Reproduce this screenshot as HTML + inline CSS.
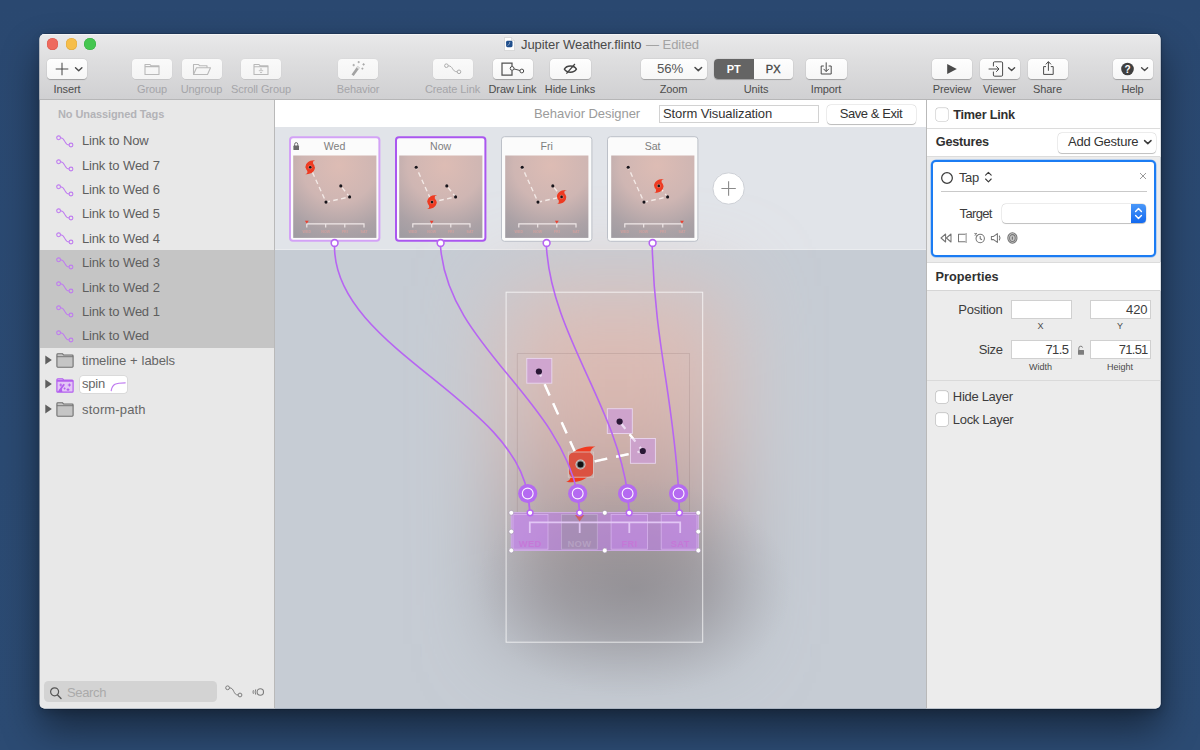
<!DOCTYPE html>
<html>
<head>
<meta charset="utf-8">
<title>Flinto</title>
<style>
*{box-sizing:border-box;margin:0;padding:0}
html,body{width:1200px;height:750px;overflow:hidden}
body{font-family:"Liberation Sans",sans-serif;background:#2b4970;position:relative;color:#3c3c3c}
.a{position:absolute}
#desk{position:absolute;left:0;top:0;width:1200px;height:750px;background:linear-gradient(180deg,#2a4870 0%,#2b4a72 60%,#2c4b73 100%)}
#shadow{position:absolute;left:39.5px;top:34px;width:1121px;height:674.5px;border-radius:5px;box-shadow:0 0 0 0.5px rgba(0,0,0,0.3),0 20px 38px rgba(0,0,0,0.46),0 3px 10px rgba(0,0,0,0.16)}
#win{position:absolute;left:0;top:0;width:1200px;height:750px;clip-path:inset(34px 39.5px 41.5px 39.5px round 5px);background:#ececec}
#tbar{position:absolute;left:0;top:34px;width:1200px;height:66px;background:linear-gradient(180deg,#e9e9ea 0%,#dededf 40%,#d0d0d2 100%);border-bottom:1px solid #b6b6b7;box-shadow:inset 0 1px 0 rgba(255,255,255,0.55)}
.tl{position:absolute;top:38.2px;width:11.6px;height:11.6px;border-radius:50%}
.btn{position:absolute;top:59px;height:20px;border-radius:4px;background:linear-gradient(180deg,#fefefe,#f6f6f6);box-shadow:0 0.5px 0.8px rgba(0,0,0,0.24),0 0 0 0.5px rgba(0,0,0,0.05)}
.btn.dis{background:linear-gradient(180deg,#fafafa,#f4f4f4);box-shadow:0 0.5px 0.5px rgba(0,0,0,0.13),0 0 0 0.5px rgba(0,0,0,0.03)}
.lbl{position:absolute;top:82px;width:90px;margin-left:-45px;text-align:center;font-size:11px;line-height:14px;color:#4d4d4d;white-space:nowrap;letter-spacing:-0.1px}
.lbl.dis{color:#a5a5a9}
.btn svg{position:absolute;left:0;top:0;overflow:visible}
/* sidebar */
#side{position:absolute;left:39.5px;top:100px;width:235px;height:609px;background:#e8e8e8;border-right:1px solid #b9b9b9}
.row{position:absolute;left:82.1px;font-size:13px;line-height:16px;color:#5e5e5e;white-space:nowrap;letter-spacing:-0.24px;word-spacing:0.5px;margin-top:0.6px}
.lk{position:absolute;left:56px;width:18px;height:13px;overflow:visible}
/* right panel */
#rp{position:absolute;left:925.5px;top:100px;width:235px;height:609px;background:#ececec;border-left:1px solid #b9b9b9}
.cb{position:absolute;width:12.6px;height:12.6px;border-radius:2.5px;background:#fff;box-shadow:0 0 0 0.5px rgba(0,0,0,0.25),inset 0 0.5px 1px rgba(0,0,0,0.06)}
.fld{position:absolute;height:19px;width:60.5px;background:#fff;border:1px solid #d0d0d0;font-size:13px;line-height:17px;text-align:right;padding-right:2.2px;color:#3c3c3c}
.sm{position:absolute;font-size:9px;line-height:10px;width:40px;margin-left:-20px;text-align:center;color:#4a4a4a}
.t13{position:absolute;font-size:13px;line-height:16px;white-space:nowrap;color:#3c3c3c}
.b13{position:absolute;font-size:12.7px;line-height:16px;font-weight:bold;white-space:nowrap;color:#303030;letter-spacing:-0.25px}
/* canvas */
#strip{position:absolute;left:275px;top:127.5px;width:651px;height:122.5px;background:#e1e4e9}
#canvas{position:absolute;left:275px;top:250px;width:651px;height:460px;background:#c6ccd4;overflow:hidden}
.card{position:absolute;top:136px;width:92px;height:106.5px;background:#fbfbfb;border-radius:3px}
.card .ttl{position:absolute;left:0;top:4px;width:100%;text-align:center;font-size:11px;line-height:13px;color:#777}
.card svg{position:absolute;left:4.5px;top:19.5px}
</style>
</head>
<body>
<div id="desk"></div>
<div id="shadow"></div>
<div id="win">
  <div id="tbar"></div>
  <div class="tl" style="left:46.8px;background:#ee6a5e;box-shadow:inset 0 0 0 0.5px #dc5a4e"></div>
  <div class="tl" style="left:65.6px;background:#f6be4a;box-shadow:inset 0 0 0 0.5px #dfa83c"></div>
  <div class="tl" style="left:84.4px;background:#45c650;box-shadow:inset 0 0 0 0.5px #38ae42"></div>
  <!--TITLE-->
  <!-- title -->
  <svg class="a" style="left:503.5px;top:37px" width="11" height="14" viewBox="0 0 11 14"><path d="M0.5 0.5H7.5L10.5 3.5V13.5H0.5Z" fill="#fdfdfd" stroke="#c9c9c9" stroke-width="0.6"/><path d="M7.5 0.5V3.5H10.5" fill="#e8e8e8" stroke="#c9c9c9" stroke-width="0.5"/><rect x="2.1" y="3.8" width="6.4" height="6.4" rx="1.4" fill="#1f4e8c"/><path d="M3.6 8.4C5 7.8 5.6 6.8 5.8 5" stroke="#9fb1c9" stroke-width="0.9" fill="none"/></svg>
  <div class="a" style="left:521px;top:36.5px;font-size:13px;line-height:16px;white-space:nowrap;color:#4a4a4a;letter-spacing:-0.07px">Jupiter Weather.flinto <span style="color:#a3a3a3;margin-left:1.2px">— Edited</span></div>

  <!-- toolbar buttons -->
  <div class="btn" style="left:47px;width:40px">
    <svg width="40" height="20"><path d="M8.7 10H21.3M15 3.7V16.3" stroke="#4a4a4a" stroke-width="1.05" fill="none"/><path d="M28.5 8.7L31.7 11.7L34.9 8.7" stroke="#4a4a4a" stroke-width="1.4" fill="none" stroke-linecap="round" stroke-linejoin="round"/></svg>
  </div>
  <div class="lbl" style="left:67px">Insert</div>

  <div class="btn dis" style="left:132px;width:40px">
    <svg width="40" height="20"><path d="M13 5.5H18L19 6.7H27V15.5H13Z M13 7.6H27" stroke="#b9b9b9" stroke-width="1.1" fill="none" stroke-linejoin="round"/></svg>
  </div>
  <div class="lbl dis" style="left:152px">Group</div>

  <div class="btn dis" style="left:181.5px;width:40px">
    <svg width="40" height="20"><path d="M11.5 15.5V5.5H16.5L17.5 6.7H25V8.7" stroke="#b9b9b9" stroke-width="1.1" fill="none" stroke-linejoin="round"/><path d="M11.5 15.5L14.5 8.7H28.5L25.5 15.5Z" stroke="#b9b9b9" stroke-width="1.1" fill="none" stroke-linejoin="round"/></svg>
  </div>
  <div class="lbl dis" style="left:201.5px">Ungroup</div>

  <div class="btn dis" style="left:241px;width:40px">
    <svg width="40" height="20"><path d="M13 5.5H18L19 6.7H27V15.5H13Z M13 7.8H27" stroke="#b9b9b9" stroke-width="1.1" fill="none" stroke-linejoin="round"/><path d="M18.7 10.5L20 9.1L21.3 10.5Z M18.7 12.9L20 14.3L21.3 12.9Z" fill="#b4b4b4"/><path d="M17.8 11.7H22.2" stroke="#b4b4b4" stroke-width="0.8"/></svg>
  </div>
  <div class="lbl dis" style="left:261px">Scroll Group</div>

  <div class="btn dis" style="left:338px;width:40px">
    <svg width="40" height="20"><path d="M14.6 16.2L20.6 7.9" stroke="#a3a3a3" stroke-width="2.7"/><path d="M19.5 9.4L20.8 7.6" stroke="#dcdcdc" stroke-width="2.7"/><path d="M15.7 4.9V7.3M14.5 6.1H16.9 M20.7 2V4.2M19.6 3.1H21.8 M25.6 4.2V6.6M24.4 5.4H26.8 M24.4 8.6V10.6M23.4 9.6H25.4" stroke="#a6a6a6" stroke-width="0.9"/></svg>
  </div>
  <div class="lbl dis" style="left:358px">Behavior</div>

  <div class="btn dis" style="left:433px;width:40px">
    <svg width="40" height="20"><circle cx="13.4" cy="6.7" r="1.8" fill="none" stroke="#acacac" stroke-width="1"/><circle cx="26" cy="12.8" r="1.8" fill="none" stroke="#acacac" stroke-width="1"/><path d="M15.2 6.8C20.2 6.8 19 12.8 24.2 12.8" fill="none" stroke="#acacac" stroke-width="1"/></svg>
  </div>
  <div class="lbl dis" style="left:452.5px">Create Link</div>

  <div class="btn" style="left:493px;width:40px">
    <svg width="40" height="20"><path d="M19 7.2V4H9V16H19V11.6" fill="none" stroke="#525252" stroke-width="1.25"/><circle cx="19.1" cy="9.4" r="1.9" fill="#fff" stroke="#4a4a4a" stroke-width="1"/><circle cx="28.8" cy="12" r="1.9" fill="#fff" stroke="#4a4a4a" stroke-width="1"/><path d="M20.9 9.9L27 11.5" stroke="#4a4a4a" stroke-width="1"/></svg>
  </div>
  <div class="lbl" style="left:512.5px">Draw Link</div>

  <div class="btn" style="left:550px;width:40.5px">
    <svg width="40" height="20"><path d="M14.4 10.1C16.8 6 24 6 26.4 10.1C24 14.2 16.8 14.2 14.4 10.1Z" fill="none" stroke="#444" stroke-width="1.5" stroke-linejoin="round"/><path d="M16.4 14.7L24.9 5" stroke="#444" stroke-width="1.25"/></svg>
  </div>
  <div class="lbl" style="left:570px">Hide Links</div>

  <div class="btn" style="left:641px;width:66px">
    <div class="a" style="left:16px;top:2px;font-size:13.2px;line-height:16px;color:#555;letter-spacing:-0.1px">56%</div>
    <svg width="66" height="20"><path d="M54 8.5L57.3 11.6L60.6 8.5" stroke="#4a4a4a" stroke-width="1.5" fill="none" stroke-linecap="round" stroke-linejoin="round"/></svg>
  </div>
  <div class="lbl" style="left:673.5px">Zoom</div>

  <div class="btn" style="left:713.5px;width:79px;overflow:hidden">
    <div class="a" style="left:0;top:0;width:40.5px;height:20px;background:#646464"></div>
    <div class="a" style="left:0;top:3.5px;width:40.5px;text-align:center;font-size:11px;line-height:13px;font-weight:bold;color:#fff">PT</div>
    <div class="a" style="left:40.5px;top:3.5px;width:38.5px;text-align:center;font-size:11px;line-height:13px;font-weight:normal;-webkit-text-stroke:0.35px #444;color:#444;letter-spacing:0.2px">PX</div>
  </div>
  <div class="lbl" style="left:756px">Units</div>

  <div class="btn" style="left:806px;width:41px">
    <svg width="41" height="20"><path d="M17.8 7H15.2V15H25.2V7H22.6" fill="none" stroke="#4a4a4a" stroke-width="1"/><path d="M20.2 3.4V12.4M17.6 9.9L20.2 12.6L22.8 9.9" fill="none" stroke="#4a4a4a" stroke-width="1"/></svg>
  </div>
  <div class="lbl" style="left:826px">Import</div>

  <div class="btn" style="left:932px;width:40px">
    <svg width="40" height="20"><path d="M15.2 5L24.8 10L15.2 15Z" fill="#4a4a4a"/></svg>
  </div>
  <div class="lbl" style="left:952px">Preview</div>

  <div class="btn" style="left:980px;width:40px">
    <svg width="40" height="20"><path d="M13.4 7.4V4Q13.4 2.8 14.6 2.8H21.4Q22.6 2.8 22.6 4V16Q22.6 17.2 21.4 17.2H14.6Q13.4 17.2 13.4 16V12.6" fill="none" stroke="#4a4a4a" stroke-width="1"/><path d="M8.6 10H18.8M16.2 7.2L19 10L16.2 12.8" fill="none" stroke="#4a4a4a" stroke-width="1"/><path d="M28.6 8.7L31.6 11.5L34.6 8.7" stroke="#4a4a4a" stroke-width="1.4" fill="none" stroke-linecap="round" stroke-linejoin="round"/></svg>
  </div>
  <div class="lbl" style="left:999.5px">Viewer</div>

  <div class="btn" style="left:1027.5px;width:40.5px">
    <svg width="40" height="20"><path d="M18 7.6H15.6V15.4H25.2V7.6H22.8" fill="none" stroke="#4a4a4a" stroke-width="1"/><path d="M20.4 11.8V2.8M17.8 5.4L20.4 2.6L23 5.4" fill="none" stroke="#4a4a4a" stroke-width="1"/></svg>
  </div>
  <div class="lbl" style="left:1047.5px">Share</div>

  <div class="btn" style="left:1113px;width:40px">
    <svg width="40" height="20"><circle cx="14.5" cy="10" r="6.3" fill="#3f3f3f"/><text x="14.5" y="13.6" font-family="Liberation Sans" font-weight="bold" font-size="10" text-anchor="middle" fill="#fff">?</text><path d="M28.6 8.7L31.6 11.5L34.6 8.7" stroke="#4a4a4a" stroke-width="1.4" fill="none" stroke-linecap="round" stroke-linejoin="round"/></svg>
  </div>
  <div class="lbl" style="left:1132.5px">Help</div>
  <!--/TOOLBAR-->
  <!--DESIGNERBAR-->
  <!-- designer bar -->
  <div class="a" style="left:275px;top:100px;width:651px;height:27.5px;background:#fff;border-bottom:1px solid #d4d6da"></div>
  <div class="a" style="left:534px;top:105.5px;font-size:13px;line-height:16px;color:#9b9b9b;white-space:nowrap;letter-spacing:-0.05px">Behavior Designer</div>
  <div class="a" style="left:658.5px;top:104.5px;width:160px;height:18.5px;background:#fff;border:1px solid #d2d2d2"></div>
  <div class="a" style="left:663px;top:105.5px;font-size:13px;line-height:16px;color:#333;white-space:nowrap;letter-spacing:-0.1px">Storm Visualization</div>
  <div class="a" style="left:826.5px;top:104.5px;width:89px;height:19px;border-radius:4px;background:#fff;box-shadow:0 0.5px 0.8px rgba(0,0,0,0.22),0 0 0 0.5px rgba(0,0,0,0.12)"></div>
  <div class="a" style="left:826.5px;top:105.5px;width:89px;text-align:center;font-size:13px;line-height:16px;color:#333;white-space:nowrap;letter-spacing:-0.42px">Save &amp; Exit</div>

  <!-- sidebar -->
  <div id="side"></div>
  <div class="a" style="left:39.5px;top:250px;width:234.5px;height:97.5px;background:#c5c5c5"></div>
  <div class="a" style="left:58px;top:107px;font-size:11px;line-height:14px;font-weight:bold;color:#b3b3b7;white-space:nowrap;letter-spacing:-0.1px">No Unassigned Tags</div>

  <svg class="lk" style="top:134.8px" viewBox="0 0 18 13"><circle cx="2.6" cy="2.8" r="1.9" fill="none" stroke="#bf7bf0" stroke-width="1.1"/><circle cx="15" cy="10" r="1.9" fill="none" stroke="#bf7bf0" stroke-width="1.1"/><path d="M4.5 2.8C9.5 2.8 8 10 13.1 10" fill="none" stroke="#bf7bf0" stroke-width="1.1"/></svg>
  <div class="row" style="top:132.8px">Link to Now</div>
  <svg class="lk" style="top:159.2px" viewBox="0 0 18 13"><circle cx="2.6" cy="2.8" r="1.9" fill="none" stroke="#bf7bf0" stroke-width="1.1"/><circle cx="15" cy="10" r="1.9" fill="none" stroke="#bf7bf0" stroke-width="1.1"/><path d="M4.5 2.8C9.5 2.8 8 10 13.1 10" fill="none" stroke="#bf7bf0" stroke-width="1.1"/></svg>
  <div class="row" style="top:157.2px">Link to Wed 7</div>
  <svg class="lk" style="top:183.5px" viewBox="0 0 18 13"><circle cx="2.6" cy="2.8" r="1.9" fill="none" stroke="#bf7bf0" stroke-width="1.1"/><circle cx="15" cy="10" r="1.9" fill="none" stroke="#bf7bf0" stroke-width="1.1"/><path d="M4.5 2.8C9.5 2.8 8 10 13.1 10" fill="none" stroke="#bf7bf0" stroke-width="1.1"/></svg>
  <div class="row" style="top:181.5px">Link to Wed 6</div>
  <svg class="lk" style="top:207.9px" viewBox="0 0 18 13"><circle cx="2.6" cy="2.8" r="1.9" fill="none" stroke="#bf7bf0" stroke-width="1.1"/><circle cx="15" cy="10" r="1.9" fill="none" stroke="#bf7bf0" stroke-width="1.1"/><path d="M4.5 2.8C9.5 2.8 8 10 13.1 10" fill="none" stroke="#bf7bf0" stroke-width="1.1"/></svg>
  <div class="row" style="top:205.9px">Link to Wed 5</div>
  <svg class="lk" style="top:232.2px" viewBox="0 0 18 13"><circle cx="2.6" cy="2.8" r="1.9" fill="none" stroke="#bf7bf0" stroke-width="1.1"/><circle cx="15" cy="10" r="1.9" fill="none" stroke="#bf7bf0" stroke-width="1.1"/><path d="M4.5 2.8C9.5 2.8 8 10 13.1 10" fill="none" stroke="#bf7bf0" stroke-width="1.1"/></svg>
  <div class="row" style="top:230.2px">Link to Wed 4</div>
  <svg class="lk" style="top:256.6px" viewBox="0 0 18 13"><circle cx="2.6" cy="2.8" r="1.9" fill="none" stroke="#bf7bf0" stroke-width="1.1"/><circle cx="15" cy="10" r="1.9" fill="none" stroke="#bf7bf0" stroke-width="1.1"/><path d="M4.5 2.8C9.5 2.8 8 10 13.1 10" fill="none" stroke="#bf7bf0" stroke-width="1.1"/></svg>
  <div class="row" style="top:254.6px">Link to Wed 3</div>
  <svg class="lk" style="top:281.0px" viewBox="0 0 18 13"><circle cx="2.6" cy="2.8" r="1.9" fill="none" stroke="#bf7bf0" stroke-width="1.1"/><circle cx="15" cy="10" r="1.9" fill="none" stroke="#bf7bf0" stroke-width="1.1"/><path d="M4.5 2.8C9.5 2.8 8 10 13.1 10" fill="none" stroke="#bf7bf0" stroke-width="1.1"/></svg>
  <div class="row" style="top:279.0px">Link to Wed 2</div>
  <svg class="lk" style="top:305.3px" viewBox="0 0 18 13"><circle cx="2.6" cy="2.8" r="1.9" fill="none" stroke="#bf7bf0" stroke-width="1.1"/><circle cx="15" cy="10" r="1.9" fill="none" stroke="#bf7bf0" stroke-width="1.1"/><path d="M4.5 2.8C9.5 2.8 8 10 13.1 10" fill="none" stroke="#bf7bf0" stroke-width="1.1"/></svg>
  <div class="row" style="top:303.3px">Link to Wed 1</div>
  <svg class="lk" style="top:329.7px" viewBox="0 0 18 13"><circle cx="2.6" cy="2.8" r="1.9" fill="none" stroke="#bf7bf0" stroke-width="1.1"/><circle cx="15" cy="10" r="1.9" fill="none" stroke="#bf7bf0" stroke-width="1.1"/><path d="M4.5 2.8C9.5 2.8 8 10 13.1 10" fill="none" stroke="#bf7bf0" stroke-width="1.1"/></svg>
  <div class="row" style="top:327.7px">Link to Wed</div>
  <svg class="a" style="left:45px;top:355px" width="8" height="10" viewBox="0 0 8 10"><path d="M0.3 0.6L6.8 5L0.3 9.4Z" fill="#5e5e5e"/></svg>
  <svg class="a" style="left:55.75px;top:353.0px" width="19" height="15" viewBox="0 0 19 15"><path d="M0.9 1.7Q0.9 0.8 1.8 0.8H6.6L7.6 2H16.2Q17.1 2 17.1 2.9V13.3Q17.1 14.2 16.2 14.2H1.8Q0.9 14.2 0.9 13.3Z" fill="#c5c5c5" stroke="#6f6f6f" stroke-width="1.1"/><path d="M0.9 3.7H17.1" stroke="#6f6f6f" stroke-width="0.9"/></svg>
  <div class="row" style="top:352.2px;color:#666;letter-spacing:-0.1px">timeline + labels</div>
  <svg class="a" style="left:45px;top:379.4px" width="8" height="10" viewBox="0 0 8 10"><path d="M0.3 0.6L6.8 5L0.3 9.4Z" fill="#5e5e5e"/></svg>
  <svg class="a" style="left:55.75px;top:377.6px" width="19" height="15" viewBox="0 0 19 15"><path d="M0.9 1.7Q0.9 0.8 1.8 0.8H6.6L7.6 2H16.2Q17.1 2 17.1 2.9V13.3Q17.1 14.2 16.2 14.2H1.8Q0.9 14.2 0.9 13.3Z" fill="#e3c6f6" stroke="#b35fee" stroke-width="1.2"/><path d="M0.9 2.9H17.1" stroke="#b35fee" stroke-width="1.8"/><path d="M3.2 13L8.2 6.2" stroke="#b35fee" stroke-width="1.8"/><path d="M4.8 5.6V8.4M3.4 7H6.2 M13.4 5.4V8.6M11.8 7H15 M12 10.2V13M10.6 11.6H13.4 M8.6 9.6V11.4M7.7 10.5H9.5" stroke="#b35fee" stroke-width="1.1"/><path d="M1.2 14L5.6 10.2L6.4 14Z" fill="#b35fee"/></svg>
  <div class="a" style="left:80px;top:376.3px;width:47px;height:17px;border-radius:3px;background:#fff;box-shadow:0 0 0 0.5px rgba(0,0,0,0.12)"></div>
  <div class="row" style="top:375.8px;color:#666">spin</div>
  <svg class="a" style="left:109.6px;top:379.6px" width="17" height="12" viewBox="0 0 17 12"><path d="M1.2 10.6C2.4 4.2 5.4 2.8 15.2 2.8" fill="none" stroke="#bf7bf0" stroke-width="1.2" stroke-linecap="round"/></svg>
  <svg class="a" style="left:45px;top:404px" width="8" height="10" viewBox="0 0 8 10"><path d="M0.3 0.6L6.8 5L0.3 9.4Z" fill="#5e5e5e"/></svg>
  <svg class="a" style="left:55.75px;top:402.0px" width="19" height="15" viewBox="0 0 19 15"><path d="M0.9 1.7Q0.9 0.8 1.8 0.8H6.6L7.6 2H16.2Q17.1 2 17.1 2.9V13.3Q17.1 14.2 16.2 14.2H1.8Q0.9 14.2 0.9 13.3Z" fill="#c5c5c5" stroke="#6f6f6f" stroke-width="1.1"/><path d="M0.9 3.7H17.1" stroke="#6f6f6f" stroke-width="0.9"/></svg>
  <div class="row" style="top:401.1px;color:#666;letter-spacing:0.15px">storm-path</div>
  <div class="a" style="left:44.2px;top:681.4px;width:173.2px;height:20.2px;border-radius:4.5px;background:#d3d3d3"></div>
  <svg class="a" style="left:49px;top:685.5px" width="14" height="14" viewBox="0 0 14 14"><circle cx="5.6" cy="5.8" r="4" fill="none" stroke="#555" stroke-width="1.2"/><path d="M8.6 8.9L12 12.4" stroke="#555" stroke-width="1.4" stroke-linecap="round"/></svg>
  <div class="a" style="left:67px;top:684.5px;font-size:13px;line-height:16px;color:#aaa;white-space:nowrap;letter-spacing:-0.35px">Search</div>
  <svg class="a" style="left:225px;top:685px" width="18" height="13" viewBox="0 0 18 13"><circle cx="2.6" cy="2.8" r="1.9" fill="none" stroke="#7d7d7d" stroke-width="1"/><circle cx="15" cy="10" r="1.9" fill="none" stroke="#7d7d7d" stroke-width="1"/><path d="M4.5 2.8C9.5 2.8 8 10 13.1 10" fill="none" stroke="#7d7d7d" stroke-width="1"/></svg>
  <svg class="a" style="left:250.5px;top:686px" width="14" height="12" viewBox="0 0 14 12"><circle cx="9.3" cy="6" r="3.2" fill="none" stroke="#7d7d7d" stroke-width="1.1"/><path d="M4.7 3.4Q3.5 6 4.7 8.6 M2.4 4.2Q1.6 6 2.4 7.8" fill="none" stroke="#7d7d7d" stroke-width="1"/></svg>

  <!--/SIDEBAR-->
  <!--CANVAS-->
  <!-- canvas -->
  <svg class="a" style="left:275px;top:127px" width="651" height="583" viewBox="275 127 651 583">
  <defs>
    <linearGradient id="abg" x1="0" y1="0" x2="0" y2="1">
      <stop offset="0" stop-color="#dcc0ba"/><stop offset="0.3" stop-color="#dbb9b1"/><stop offset="0.55" stop-color="#c4a9a6"/><stop offset="0.8" stop-color="#97949a"/><stop offset="1" stop-color="#a4a5ab"/>
    </linearGradient>
    <filter id="blur" x="-120%" y="-70%" width="340%" height="240%"><feGaussianBlur stdDeviation="42"/></filter>
    <radialGradient id="gry" cx="0.5" cy="0.5" r="0.5"><stop offset="0" stop-color="#8c8a8f" stop-opacity="0.62"/><stop offset="0.45" stop-color="#908e93" stop-opacity="0.36"/><stop offset="1" stop-color="#a0a0a6" stop-opacity="0"/></radialGradient>
    <radialGradient id="thg" cx="0.55" cy="0.12" r="1.0">
      <stop offset="0" stop-color="#ddbcb4"/><stop offset="0.45" stop-color="#cfb6b3"/><stop offset="0.8" stop-color="#aca2a6"/><stop offset="1" stop-color="#a09ca2"/>
    </radialGradient>
    <g id="hur">
      <path d="M-4.6,0.5 C-4.8,-4 -1.5,-7.3 5.2,-7.0 C3.0,-6.3 2.3,-5.4 3.0,-3.5 Z" fill="#ee3b22"/>
      <path d="M4.6,-0.5 C4.8,4 1.5,7.3 -4.9,6.9 C-3.0,6.3 -2.3,5.4 -3.0,3.5 Z" fill="#ee3b22"/>
      <circle r="4.5" fill="#ee3b22"/>
    </g>
    <g id="tails">
      <path d="M-4.6,0.5 C-4.8,-4 -1.5,-7.0 5.6,-6.7 C3.7,-5.9 3.2,-4.8 4.2,-2.2 Z" fill="#f03a20"/>
      <path d="M4.6,-0.5 C4.8,4 1.5,7.0 -5.4,6.6 C-3.6,5.9 -3.2,4.8 -4.2,2.2 Z" fill="#f03a20"/>
    </g>
    <g id="thumb">
      <rect x="0" y="0" width="83.2" height="82.4" fill="url(#thg)"/>
      <path d="M17,11.8L32.8,46.6L56.4,41.4L47.6,30.4" fill="none" stroke="#f3e9e6" stroke-width="1.35" stroke-dasharray="4.7 3.3" stroke-dashoffset="2.4"/>
      <path d="M13.6,72V68.4H70.8V72M32.5,68.4V72M51.6,68.4V72" fill="none" stroke="#f0e8e8" stroke-width="1.15"/>
      <g font-family="Liberation Sans" font-weight="bold" font-size="3.6" text-anchor="middle" fill="#e6a19b" opacity="0.62"><text x="13.6" y="77.8">WED</text><text x="32.5" y="77.6">NOW</text><text x="51.6" y="77.6">FRI</text><text x="70.8" y="77.6">SAT</text></g>
    </g>
  </defs>
  <rect x="275" y="127" width="651" height="123" fill="#e1e4e9"/>
  <rect x="275" y="250" width="651" height="460" fill="#c6ccd4"/>
  <rect x="275" y="249" width="651" height="1" fill="#fff" fill-opacity="0.3"/>
  <rect x="504" y="286" width="224" height="358" fill="url(#abg)" filter="url(#blur)"/>
  <ellipse cx="634" cy="588" rx="158" ry="110" fill="url(#gry)"/>
  <rect x="506.1" y="292.2" width="196.6" height="350" fill="none" stroke="#fff" stroke-opacity="0.72" stroke-width="1"/>
  <path d="M517.3,512V353.5H689.5V512" fill="none" stroke="#7a5a5a" stroke-opacity="0.22" stroke-width="0.8"/>
  <g fill="none" stroke="#fff" stroke-width="2.4"><path d="M538.9,371.5L580.6,464.4" stroke-dasharray="12.2 8.6" stroke-dashoffset="6.8"/><path d="M580.6,464.4L642.8,451" stroke-dasharray="12.8 9.1" stroke-dashoffset="7.5"/><path d="M642.8,451L619.6,421.6" stroke-dasharray="9.3 6.9" stroke-dashoffset="4.2"/></g>
  <rect x="526.8" y="358.4" width="25" height="24.8" fill="#cc9cd6" fill-opacity="0.74" stroke="#ecdaf4" stroke-opacity="0.9" stroke-width="0.9"/>
  <rect x="607.3" y="408.7" width="25" height="24.8" fill="#cc9cd6" fill-opacity="0.74" stroke="#ecdaf4" stroke-opacity="0.9" stroke-width="0.9"/>
  <rect x="630.4" y="438.5" width="25" height="24.8" fill="#cc9cd6" fill-opacity="0.74" stroke="#ecdaf4" stroke-opacity="0.9" stroke-width="0.9"/>
  <g fill="none" stroke="#fff" stroke-opacity="0.5" stroke-width="2.2"><path d="M538.9,371.5L580.6,464.4" stroke-dasharray="12.2 8.6" stroke-dashoffset="6.8"/><path d="M580.6,464.4L642.8,451" stroke-dasharray="12.8 9.1" stroke-dashoffset="7.5"/><path d="M642.8,451L619.6,421.6" stroke-dasharray="9.3 6.9" stroke-dashoffset="4.2"/></g>
  <circle cx="538.9" cy="371.5" r="3.1" fill="#2a1836"/>
  <circle cx="619.6" cy="421.6" r="3.1" fill="#2a1836"/>
  <circle cx="642.8" cy="451" r="3.1" fill="#2a1836"/>
  <g transform="translate(580.5,464.5) scale(2.67)"><use href="#tails"/></g>
  <rect x="568.6" y="452.3" width="24.6" height="24.6" rx="5.5" fill="#db5241"/>
  <rect x="568.3" y="452" width="25.2" height="25.2" fill="none" stroke="#d8c8c4" stroke-opacity="0.9" stroke-width="0.9"/>
  <circle cx="580.5" cy="464.5" r="5" fill="#d9d2d0"/><circle cx="580.5" cy="464.5" r="4.3" fill="#8e8e8e"/><circle cx="580.5" cy="464.5" r="3" fill="#121212"/>
  <path d="M334.5,246.5 C334.6,347.3 510.8,398.2 527.5,493.2" fill="none" stroke="#b765f2" stroke-width="1.6"/>
  <path d="M440.5,246.5 C448.1,344.7 556.2,395.3 577.6,493.2" fill="none" stroke="#b765f2" stroke-width="1.6"/>
  <path d="M546.4,246.5 C551.6,334.2 615.8,404.8 627.6,493.4" fill="none" stroke="#b765f2" stroke-width="1.6"/>
  <path d="M652.2,246.5 C655.1,346.4 673.0,394.2 678.8,493.4" fill="none" stroke="#b765f2" stroke-width="1.6"/>
  <rect x="511.2" y="512.6" width="187.2" height="38" fill="#bd7fe6" fill-opacity="0.6"/>
  <rect x="513" y="514.4" width="35" height="34.8" fill="#c98cee" fill-opacity="0.4" stroke="#dfbdf5" stroke-opacity="0.8" stroke-width="0.8"/>
  <rect x="561.5" y="514.4" width="35.8" height="34.8" fill="#9a90a2" fill-opacity="0.5" stroke="#cbb8da" stroke-opacity="0.7" stroke-width="0.8"/>
  <rect x="611.1" y="514.4" width="36.4" height="34.8" fill="#c98cee" fill-opacity="0.4" stroke="#dfbdf5" stroke-opacity="0.8" stroke-width="0.8"/>
  <rect x="661.2" y="514.4" width="35.8" height="34.8" fill="#c98cee" fill-opacity="0.4" stroke="#dfbdf5" stroke-opacity="0.8" stroke-width="0.8"/>
  <path d="M529.8,533V522.4H680.2V533M579.7,522.4V533M629.3,522.4V533" fill="none" stroke="#e6ccf7" stroke-opacity="0.9" stroke-width="1.8"/>
  <path d="M575,515H584.2L579.6,521.6Z" fill="#de5248" fill-opacity="0.75"/>
  <g font-family="Liberation Sans" font-weight="bold" font-size="9.4" letter-spacing="0.3" text-anchor="middle" fill="#c776d8" fill-opacity="0.92"><text x="530.2" y="546.6">WED</text><text x="579.4" y="546.6" fill="#b9a6c6" fill-opacity="0.8">NOW</text><text x="629.4" y="546.6">FRI</text><text x="680.2" y="546.6">SAT</text></g>
  <rect x="511.2" y="512.6" width="187.2" height="38" fill="none" stroke="#d9b4f3" stroke-opacity="0.9" stroke-width="0.8"/>
  <path d="M527.7,493.4L530.1,512.8" stroke="#b765f2" stroke-width="1.8"/>
  <circle cx="527.7" cy="493.5" r="9.6" fill="#b56af1"/><circle cx="527.7" cy="493.5" r="5.4" fill="none" stroke="#fff" stroke-opacity="0.92" stroke-width="1.15"/>
  <circle cx="530.1" cy="512.8" r="2.9" fill="#fff" stroke="#b765f2" stroke-width="1.5"/>
  <path d="M577.7,493.4L579.7,512.8" stroke="#b765f2" stroke-width="1.8"/>
  <circle cx="577.7" cy="493.5" r="9.6" fill="#b56af1"/><circle cx="577.7" cy="493.5" r="5.4" fill="none" stroke="#fff" stroke-opacity="0.92" stroke-width="1.15"/>
  <circle cx="579.7" cy="512.8" r="2.9" fill="#fff" stroke="#b765f2" stroke-width="1.5"/>
  <path d="M627.6,493.4L629.2,512.8" stroke="#b765f2" stroke-width="1.8"/>
  <circle cx="627.6" cy="493.5" r="9.6" fill="#b56af1"/><circle cx="627.6" cy="493.5" r="5.4" fill="none" stroke="#fff" stroke-opacity="0.92" stroke-width="1.15"/>
  <circle cx="629.2" cy="512.8" r="2.9" fill="#fff" stroke="#b765f2" stroke-width="1.5"/>
  <path d="M678.6,493.4L679.4,512.8" stroke="#b765f2" stroke-width="1.8"/>
  <circle cx="678.6" cy="493.5" r="9.6" fill="#b56af1"/><circle cx="678.6" cy="493.5" r="5.4" fill="none" stroke="#fff" stroke-opacity="0.92" stroke-width="1.15"/>
  <circle cx="679.4" cy="512.8" r="2.9" fill="#fff" stroke="#b765f2" stroke-width="1.5"/>
  <circle cx="511.3" cy="512.8" r="2.4" fill="#fff" stroke="#9a8aa8" stroke-width="0.5"/>
  <circle cx="511.3" cy="531.6" r="2.4" fill="#fff" stroke="#9a8aa8" stroke-width="0.5"/>
  <circle cx="511.3" cy="550.5" r="2.4" fill="#fff" stroke="#9a8aa8" stroke-width="0.5"/>
  <circle cx="604.8" cy="512.8" r="2.4" fill="#fff" stroke="#9a8aa8" stroke-width="0.5"/>
  <circle cx="604.8" cy="550.5" r="2.4" fill="#fff" stroke="#9a8aa8" stroke-width="0.5"/>
  <circle cx="698.3" cy="512.8" r="2.4" fill="#fff" stroke="#9a8aa8" stroke-width="0.5"/>
  <circle cx="698.3" cy="531.6" r="2.4" fill="#fff" stroke="#9a8aa8" stroke-width="0.5"/>
  <circle cx="698.3" cy="550.5" r="2.4" fill="#fff" stroke="#9a8aa8" stroke-width="0.5"/>
  <rect x="290.0" y="137.2" width="89.4" height="103.6" rx="3" fill="#fbfbfb" stroke="#d3a2f6" stroke-width="2"/>
  <g transform="translate(293.2,155.5)"><use href="#thumb"/>
    <circle cx="32.8" cy="46.6" r="1.55" fill="#17141a"/>
    <circle cx="56.4" cy="41.4" r="1.55" fill="#17141a"/>
    <circle cx="47.6" cy="30.4" r="1.55" fill="#17141a"/>
    <g transform="translate(17,11.8)"><use href="#hur"/><circle r="2.1" fill="#e8705e"/><circle r="1.3" fill="#12181a"/></g>
    <path d="M11.7,65.2H15.5L13.6,68.2Z" fill="#ea4030"/>
  </g>
  <circle cx="334.6" cy="243" r="3.4" fill="#fff" stroke="#b765f2" stroke-width="1.6"/>
  <rect x="396.0" y="137.2" width="89.4" height="103.6" rx="3" fill="#fbfbfb" stroke="#aa57ef" stroke-width="2"/>
  <g transform="translate(399.2,155.5)"><use href="#thumb"/>
    <circle cx="17" cy="11.8" r="1.55" fill="#17141a"/>
    <circle cx="56.4" cy="41.4" r="1.55" fill="#17141a"/>
    <circle cx="47.6" cy="30.4" r="1.55" fill="#17141a"/>
    <g transform="translate(32.8,46.6)"><use href="#hur"/><circle r="2.1" fill="#e8705e"/><circle r="1.3" fill="#12181a"/></g>
    <path d="M30.6,65.2H34.4L32.5,68.2Z" fill="#ea4030"/>
  </g>
  <circle cx="440.6" cy="243" r="3.4" fill="#fff" stroke="#b765f2" stroke-width="1.6"/>
  <rect x="501.5" y="136.7" width="90.4" height="104.6" rx="3" fill="#fbfbfb" stroke="#bcc0c8" stroke-width="1"/>
  <g transform="translate(505.2,155.5)"><use href="#thumb"/>
    <circle cx="17" cy="11.8" r="1.55" fill="#17141a"/>
    <circle cx="32.8" cy="46.6" r="1.55" fill="#17141a"/>
    <circle cx="47.6" cy="30.4" r="1.55" fill="#17141a"/>
    <g transform="translate(56.4,41.4)"><use href="#hur"/><circle r="2.1" fill="#e8705e"/><circle r="1.3" fill="#12181a"/></g>
    <path d="M49.7,65.2H53.5L51.6,68.2Z" fill="#ea4030"/>
  </g>
  <circle cx="546.6" cy="243" r="3.4" fill="#fff" stroke="#b765f2" stroke-width="1.6"/>
  <rect x="607.5" y="136.7" width="90.4" height="104.6" rx="3" fill="#fbfbfb" stroke="#bcc0c8" stroke-width="1"/>
  <g transform="translate(611.2,155.5)"><use href="#thumb"/>
    <circle cx="17" cy="11.8" r="1.55" fill="#17141a"/>
    <circle cx="32.8" cy="46.6" r="1.55" fill="#17141a"/>
    <circle cx="56.4" cy="41.4" r="1.55" fill="#17141a"/>
    <g transform="translate(47.6,30.4)"><use href="#hur"/><circle r="2.1" fill="#e8705e"/><circle r="1.3" fill="#12181a"/></g>
    <path d="M68.89999999999999,65.2H72.7L70.8,68.2Z" fill="#ea4030"/>
  </g>
  <circle cx="652.6" cy="243" r="3.4" fill="#fff" stroke="#b765f2" stroke-width="1.6"/>
  <g font-family="Liberation Sans" font-size="10.6" text-anchor="middle" fill="#7e7e7e"><text x="334.6" y="150">Wed</text><text x="440.6" y="150">Now</text><text x="546.6" y="150">Fri</text><text x="652.6" y="150">Sat</text></g>
  <path d="M294.6,146V144.6Q294.6,142.6 296.2,142.6Q297.8,142.6 297.8,144.6V146" fill="none" stroke="#6a6a6a" stroke-width="1"/><rect x="293.4" y="145.6" width="5.6" height="4.4" rx="0.6" fill="#6a6a6a"/>
  <circle cx="728.6" cy="188.5" r="15.7" fill="#fff" stroke="#cdd0d6" stroke-width="1"/><path d="M721.4,188.5H735.8M728.6,181.3V195.7" stroke="#8a8a8a" stroke-width="1.1"/>
  </svg>
  <!--/CANVAS-->
  <!--RIGHTPANEL-->
  <!-- right panel -->
  <div id="rp"></div>
  <div class="a" style="left:926.5px;top:100px;width:234px;height:56.5px;background:#fff"></div>
  <div class="a" style="left:926.5px;top:127.5px;width:234px;height:1px;background:#dcdcdc"></div>
  <div class="a" style="left:926.5px;top:156px;width:234px;height:1px;background:#dcdcdc"></div>
  <div class="cb" style="left:935.5px;top:108px"></div>
  <div class="b13" style="left:953.3px;top:106.5px">Timer Link</div>
  <div class="b13" style="left:935.8px;top:134px">Gestures</div>
  <div class="a" style="left:1058px;top:133px;width:97.5px;height:19.5px;border-radius:4px;background:#fff;box-shadow:0 0.5px 0.8px rgba(0,0,0,0.2),0 0 0 0.5px rgba(0,0,0,0.13)"></div>
  <div class="t13" style="left:1068px;top:134.3px;color:#333;letter-spacing:-0.25px">Add Gesture</div>
  <svg class="a" style="left:1142.8px;top:138px" width="10" height="8"><path d="M1.6 2.6L4.8 5.6L8 2.6" stroke="#3c3c3c" stroke-width="1.5" fill="none" stroke-linecap="round" stroke-linejoin="round"/></svg>

  <!-- gesture box -->
  <div class="a" style="left:931px;top:159.9px;width:225px;height:97px;border-radius:5px;background:#fff;border:2px solid #1b7cf3;box-shadow:0 0 0 0.5px rgba(27,124,243,0.5)"></div>
  <svg class="a" style="left:940px;top:170.5px" width="14" height="14"><circle cx="7" cy="7" r="5.35" fill="none" stroke="#3c3c3c" stroke-width="1.25"/></svg>
  <div class="t13" style="left:959px;top:169.7px;letter-spacing:-0.4px">Tap</div>
  <svg class="a" style="left:984px;top:170px" width="9" height="14"><path d="M1.6 5.2L4.4 2.4L7.2 5.2M1.6 9L4.4 11.8L7.2 9" stroke="#3c3c3c" stroke-width="1.1" fill="none" stroke-linecap="round" stroke-linejoin="round"/></svg>
  <svg class="a" style="left:1139.1px;top:171.7px" width="8" height="8"><path d="M1 1L7 7M7 1L1 7" stroke="#8e8e8e" stroke-width="0.9"/></svg>
  <div class="a" style="left:940.5px;top:190.8px;width:206px;height:1px;background:#c9c9c9"></div>
  <div class="t13" style="left:959.6px;top:205.6px;letter-spacing:-0.65px">Target</div>
  <div class="a" style="left:1001.5px;top:204px;width:144.5px;height:19px;border-radius:4px;background:#fff;box-shadow:0 0.5px 0.8px rgba(0,0,0,0.2),0 0 0 0.5px rgba(0,0,0,0.13);overflow:hidden">
    <div class="a" style="left:129.5px;top:0;width:15px;height:19px;background:linear-gradient(180deg,#4a98f9,#1369ef)"></div>
    <svg class="a" style="left:129.5px;top:0" width="15" height="19"><path d="M4.6 7.4L7.5 4.5L10.4 7.4M4.6 11.6L7.5 14.5L10.4 11.6" stroke="#fff" stroke-width="1.4" fill="none" stroke-linecap="round" stroke-linejoin="round"/></svg>
  </div>
  <!-- option icons -->
  <svg class="a" style="left:939px;top:231px" width="80" height="14" viewBox="0 0 80 14"><g fill="none" stroke="#767676" stroke-width="1.05" stroke-linejoin="round">
    <path d="M6.6 3L2 7L6.6 11Z M12 3L7.4 7L12 11Z"/>
    <path d="M26.5 3.2H19.5V10.8H26.5" /><path d="M27.2 2.6V11.6" stroke-width="1.6" stroke-dasharray="0.9 1.1"/>
    <circle cx="41.2" cy="7.5" r="4.2"/><path d="M41.2 5V7.7L43 8.7"/><path d="M35.6 2.2L37.8 4.4M37.8 2.2L35.6 4.4"/>
    <path d="M52.4 5.4H54.6L58.4 2.6V11.4L54.6 8.6H52.4Z"/><path d="M60.2 4.6Q61.8 7 60.2 9.4"/>
    <ellipse cx="73.4" cy="7" rx="4.6" ry="5.2" fill="#cfcfcf"/><ellipse cx="73.4" cy="7" rx="2.8" ry="3.4"/><path d="M73.4 5.4V8.8" stroke-width="1.4"/>
  </g></svg>

  <!-- properties -->
  <div class="a" style="left:926.5px;top:262px;width:234px;height:28.6px;background:#fff;border-top:1px solid #dcdcdc;border-bottom:1px solid #d6d6d6"></div>
  <div class="b13" style="left:935.6px;top:268.5px;letter-spacing:0.03px">Properties</div>
  <div class="t13" style="left:920.5px;width:82px;text-align:right;top:301.5px;letter-spacing:-0.25px">Position</div>
  <div class="fld" style="left:1011px;top:300.3px"></div>
  <div class="fld" style="left:1090.3px;top:300.3px">420</div>
  <div class="sm" style="left:1040.5px;top:321px">X</div>
  <div class="sm" style="left:1120px;top:321px">Y</div>
  <div class="t13" style="left:920.5px;width:82px;text-align:right;top:341.5px;letter-spacing:-0.4px">Size</div>
  <div class="fld" style="left:1011px;top:340.3px;letter-spacing:-0.6px">71.5</div>
  <div class="fld" style="left:1090.3px;top:340.3px;letter-spacing:-0.75px">71.51</div>
  <svg class="a" style="left:1077px;top:345px" width="8" height="11"><path d="M1.8 5V3.2Q1.8 1.2 3.8 1.2Q5.4 1.2 5.6 2.6" fill="none" stroke="#7d7d7d" stroke-width="1"/><rect x="1" y="5" width="6" height="4.8" rx="0.6" fill="#7d7d7d"/></svg>
  <div class="sm" style="left:1040.5px;top:361.5px">Width</div>
  <div class="sm" style="left:1120px;top:361.5px">Height</div>
  <div class="a" style="left:926.5px;top:380px;width:234px;height:1px;background:#dadada"></div>
  <div class="cb" style="left:935.8px;top:390.5px"></div>
  <div class="t13" style="left:952.8px;top:389px;letter-spacing:-0.3px">Hide Layer</div>
  <div class="cb" style="left:935.8px;top:413px"></div>
  <div class="t13" style="left:952.8px;top:411.7px;letter-spacing:-0.3px">Lock Layer</div>
  <!--/RIGHTPANEL-->
</div>
</body>
</html>
